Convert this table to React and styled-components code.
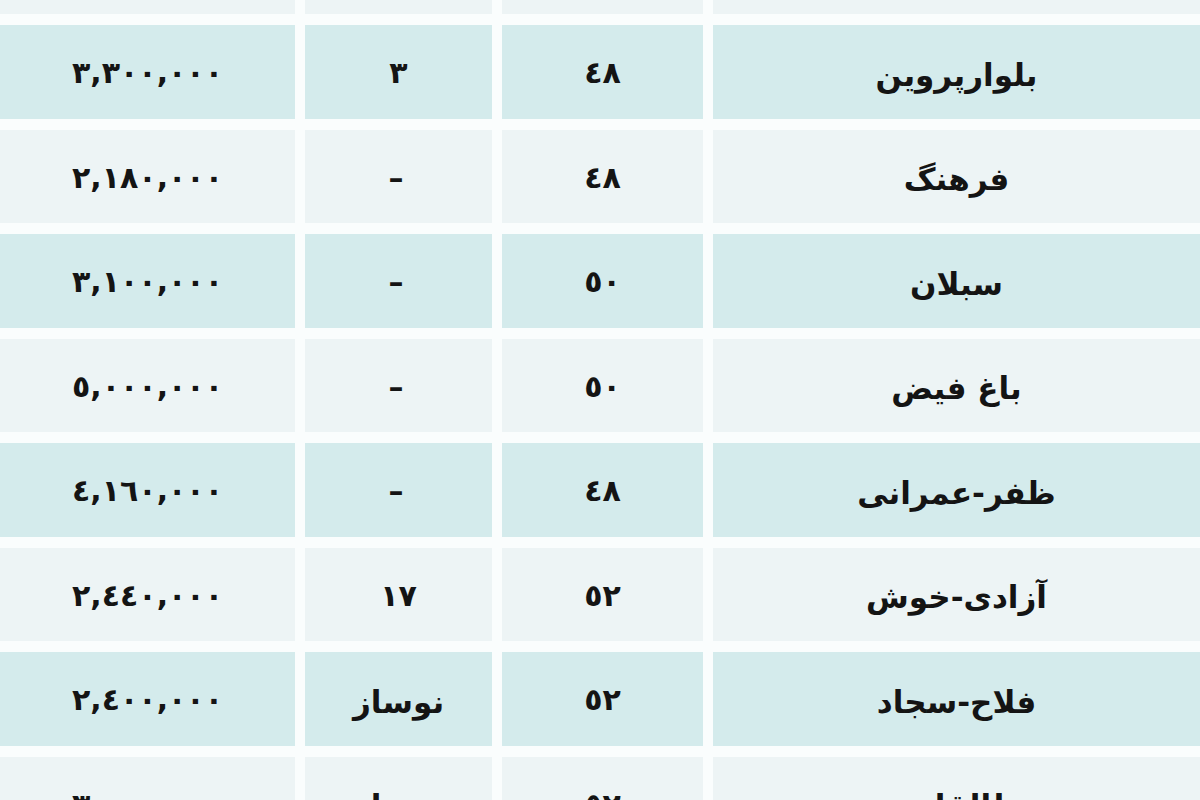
import React from "react";
import styled, { createGlobalStyle } from "styled-components";

const Global = createGlobalStyle`
  html, body { margin: 0; padding: 0; background: #fafdfd; }
  body { font-family: "DejaVu Sans", "Noto Sans", sans-serif; overflow: hidden; }
`;

const Table = styled.div`
  display: grid;
  grid-template-columns: 295px 187px 201px 1fr;
  grid-auto-rows: 93.5px;
  grid-template-rows: 14px;
  column-gap: 10px;
  row-gap: 11px;
  width: 1200px;
  height: 800px;
  overflow: hidden;
  background: #fafdfd;
`;

const Cell = styled.div`
  background: ${(p) => (p.$shade ? "#d4ebec" : "#edf4f5")};
  display: flex;
  align-items: center;
  justify-content: center;
  direction: rtl;
  font-family: "DejaVu Sans", sans-serif;
  font-weight: 700;
  font-size: ${(p) => (p.$num ? "30px" : "31px")};
  letter-spacing: ${(p) => (p.$num ? "5px" : "0")};
  color: #141414;
  padding-top: ${(p) => (p.$num ? "2px" : "6px")};
  box-sizing: border-box;
  white-space: nowrap;
`;

const rows = [
  ["٣,٣٠٠,٠٠٠", "٣", "٤٨", "بلوارپروین"],
  ["٢,١٨٠,٠٠٠", "–", "٤٨", "فرهنگ"],
  ["٣,١٠٠,٠٠٠", "–", "٥٠", "سبلان"],
  ["٥,٠٠٠,٠٠٠", "–", "٥٠", "باغ فیض"],
  ["٤,١٦٠,٠٠٠", "–", "٤٨", "ظفر-عمرانی"],
  ["٢,٤٤٠,٠٠٠", "١٧", "٥٢", "آزادی-خوش"],
  ["٢,٤٠٠,٠٠٠", "نوساز", "٥٢", "فلاح-سجاد"],
  ["٣,٠٠٠,٠٠٠", "نوساز", "٥٢", "طالقانی"],
];

const isNum = (s) => !/[\u0621-\u064A\u067E-\u06CC]/.test(s);

export default function App() {
  return (
    <>
      <Global />
      <Table>
        {[0, 1, 2, 3].map((i) => (
          <Cell key={`top-${i}`} />
        ))}
        {rows.map((r, ri) =>
          r.map((c, ci) => (
            <Cell key={`${ri}-${ci}`} $shade={ri % 2 === 0} $num={isNum(c)}>
              {c}
            </Cell>
          ))
        )}
      </Table>
    </>
  );
}
